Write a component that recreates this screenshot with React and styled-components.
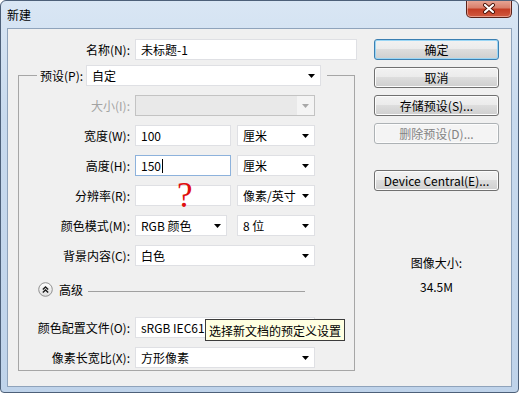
import React from 'react';
import styled, { createGlobalStyle, css } from 'styled-components';

const GlobalStyle = createGlobalStyle`
  html, body { margin: 0; padding: 0; background: #fff; }
  body {
    font-family: "Noto Sans CJK SC", "Noto Sans", sans-serif;
    font-size: 12px;
    color: #000;
  }
`;

const Window = styled.div`
  width: 519px;
  height: 393px;
  box-sizing: border-box;
  border: 1px solid #4d6079;
  border-radius: 6px 6px 4px 4px;
  background: linear-gradient(180deg, #d9e6f4 0%, #c8daee 30%, #bfd3ea 100%);
  display: flex;
  flex-direction: column;
  overflow: hidden;
`;

const TitleBar = styled.div`
  height: 27px;
  flex: none;
  display: flex;
  align-items: flex-start;
  padding-left: 6px;
`;

const Title = styled.span`
  line-height: 27px;
  font-size: 12px;
`;

const CloseButton = styled.div`
  margin-left: auto;
  margin-right: 6px;
  margin-top: -1px;
  width: 46px;
  height: 18px;
  box-sizing: border-box;
  border: 1px solid #5a2219;
  border-top: none;
  border-radius: 0 0 5px 5px;
  background: linear-gradient(180deg, #e8a898 0%, #d9806c 45%, #c43d24 55%, #d15a40 100%);
  box-shadow: inset 0 0 0 1px rgba(255, 220, 210, 0.5);
  display: flex;
  align-items: center;
  justify-content: center;
`;

const Client = styled.div`
  flex: 1;
  margin: 0 6px 5px 6px;
  border: 1px solid #8fa3bb;
  background: #f0f0f0;
  display: flex;
`;

const LeftPanel = styled.div`
  width: 350px;
  flex: none;
  padding-top: 10px;
`;

const NameRow = styled.div`
  display: grid;
  grid-template-columns: 122px 222px;
  column-gap: 5px;
  height: 21px;
`;

const Label = styled.span`
  display: flex;
  align-items: center;
  justify-content: flex-end;
  white-space: nowrap;
  color: ${(p) => (p.$disabled ? '#a3a3a3' : '#000')};
`;

const boxBase = css`
  box-sizing: border-box;
  height: 21px;
  display: flex;
  align-items: center;
  background: #fff;
  border: 1px solid ${(p) => (p.$focused ? '#8db2dc' : '#dfe0e4')};
  padding-left: 5px;
  white-space: nowrap;
  width: ${(p) => (p.$w ? `${p.$w}px` : '100%')};
`;

const TextBox = styled.div`
  ${boxBase};
  position: relative;
`;

const SelectBox = styled.div`
  ${boxBase};
  padding-right: 5px;
  justify-content: space-between;
  position: relative;
  ${(p) =>
    p.$disabled &&
    css`
      background: linear-gradient(90deg, #e9e9e9 0, #e9e9e9 calc(100% - 17px), #f4f4f4 calc(100% - 17px));
      border-color: #c3c3c3;
    `}
`;

const SelectText = styled.span`
  overflow: hidden;
  flex: 1;
`;

const Caret = styled.span`
  display: inline-block;
  width: 1px;
  height: 14px;
  background: #000;
  margin-left: 1px;
`;

const Mark = styled.span`
  position: absolute;
  left: 41px;
  top: -6px;
  font-family: "Liberation Serif", serif;
  font-size: 35px;
  line-height: 32px;
  color: #e01010;
`;

const GroupBox = styled.fieldset`
  margin: 5px 0 0 10px;
  padding: 0 0 2px 0;
  width: 337px;
  box-sizing: border-box;
  border: 1px solid #a6a6a6;
  min-width: 0;
`;

const Legend = styled.legend`
  margin-left: 18px;
  padding: 0 6px 0 3px;
  display: flex;
  align-items: center;
  gap: 3px;
  height: 21px;
`;

const FieldGrid = styled.div`
  display: grid;
  grid-template-columns: 111px 180px;
  column-gap: 5px;
  row-gap: 9px;
  grid-auto-rows: 21px;
  margin-top: ${(p) => p.$top}px;
`;

const Pair = styled.div`
  display: flex;
  justify-content: space-between;
`;

const AdvancedRow = styled.div`
  display: flex;
  align-items: center;
  height: 16px;
  margin-top: 15px;
  padding-left: 19px;
`;

const AdvancedText = styled.span`
  margin-left: 6px;
`;

const Rule = styled.div`
  flex: none;
  width: 217px;
  height: 1px;
  margin: 4px 0 0 5px;
  background: #a0a0a0;
`;

const Tooltip = styled.div`
  position: absolute;
  left: 69px;
  top: 1px;
  z-index: 2;
  height: 22px;
  box-sizing: border-box;
  padding: 0 3px 0 3px;
  display: flex;
  align-items: center;
  background: #ffffe1;
  border: 1px solid #3c3c3c;
  white-space: nowrap;
`;

const RightColumn = styled.div`
  width: 125px;
  padding: 10px 0 0 16px;
  display: flex;
  flex-direction: column;
  gap: 7px;
`;

const Button = styled.div`
  height: 21px;
  box-sizing: border-box;
  display: flex;
  align-items: center;
  justify-content: center;
  border-radius: 3px;
  border: 1px solid ${(p) => (p.$default ? '#3c7fb1' : p.$disabled ? '#adb2b5' : '#707070')};
  color: ${(p) => (p.$disabled ? '#838383' : '#000')};
  background: ${(p) =>
    p.$disabled
      ? '#f4f4f4'
      : 'linear-gradient(180deg, #f2f2f2 0%, #ebebeb 49%, #dddddd 50%, #cfcfcf 100%)'};
  box-shadow: ${(p) => (p.$default ? 'inset 0 0 0 1px #9ad6f5' : 'inset 0 0 0 1px #fcfcfc')};
  margin-top: ${(p) => p.$gapTop || 0}px;
  white-space: nowrap;
`;

const SizeInfo = styled.div`
  margin-top: 57px;
  display: flex;
  flex-direction: column;
  align-items: center;
  gap: 8px;
  line-height: 16px;
`;

const Arrow = ({ disabled }) => (
  <svg width="7" height="4" viewBox="0 0 7 4">
    <polygon points="0,0 7,0 3.5,4" fill={disabled ? '#a8a8a8' : '#000'} />
  </svg>
);

const Select = ({ children, w, disabled }) => (
  <SelectBox $w={w} $disabled={disabled}>
    <SelectText>{children}</SelectText>
    <Arrow disabled={disabled} />
  </SelectBox>
);

const CollapseIcon = () => (
  <svg width="15" height="15" viewBox="0 0 15 15">
    <defs>
      <linearGradient id="cg" x1="0" y1="0" x2="0" y2="1">
        <stop offset="0" stopColor="#ffffff" />
        <stop offset="1" stopColor="#dedede" />
      </linearGradient>
    </defs>
    <circle cx="7.5" cy="7.5" r="6.8" fill="url(#cg)" stroke="#8f8f8f" strokeWidth="1" />
    <path d="M4.8 7.4 L7.5 4.9 L10.2 7.4 M4.8 10.4 L7.5 7.9 L10.2 10.4" fill="none" stroke="#1a1a1a" strokeWidth="1.4" />
  </svg>
);

const CloseIcon = () => (
  <svg width="14" height="11" viewBox="0 0 14 11">
    <path d="M3 2 L11 9 M11 2 L3 9" stroke="#4a1208" strokeWidth="4" strokeLinecap="round" />
    <path d="M3 2 L11 9 M11 2 L3 9" stroke="#ffffff" strokeWidth="2.2" strokeLinecap="round" />
  </svg>
);

export default function App() {
  return (
    <Window>
      <GlobalStyle />
      <TitleBar>
        <Title>新建</Title>
        <CloseButton>
          <CloseIcon />
        </CloseButton>
      </TitleBar>
      <Client>
        <LeftPanel>
          <NameRow>
            <Label>名称(N):</Label>
            <TextBox>未标题-1</TextBox>
          </NameRow>

          <GroupBox>
            <Legend>
              <Label>预设(P):</Label>
              <Select w={235}>自定</Select>
            </Legend>

            <FieldGrid $top={9}>
              <Label $disabled>大小(I):</Label>
              <Select disabled />

              <Label>宽度(W):</Label>
              <Pair>
                <TextBox $w={96}>100</TextBox>
                <Select w={78}>厘米</Select>
              </Pair>

              <Label>高度(H):</Label>
              <Pair>
                <TextBox $w={96} $focused>
                  150<Caret />
                </TextBox>
                <Select w={78}>厘米</Select>
              </Pair>

              <Label>分辨率(R):</Label>
              <Pair>
                <TextBox $w={96}>
                  <Mark>?</Mark>
                </TextBox>
                <Select w={78}>像素/英寸</Select>
              </Pair>

              <Label>颜色模式(M):</Label>
              <Pair>
                <Select w={92}>RGB 颜色</Select>
                <Select w={78}>8 位</Select>
              </Pair>

              <Label>背景内容(C):</Label>
              <Select>白色</Select>
            </FieldGrid>

            <AdvancedRow>
              <CollapseIcon />
              <AdvancedText>高级</AdvancedText>
              <Rule />
            </AdvancedRow>

            <FieldGrid $top={20}>
              <Label>颜色配置文件(O):</Label>
              <SelectBox>
                <SelectText>sRGB IEC61</SelectText>
                <Arrow />
                <Tooltip>选择新文档的预定义设置</Tooltip>
              </SelectBox>

              <Label>像素长宽比(X):</Label>
              <Select>方形像素</Select>
            </FieldGrid>
          </GroupBox>
        </LeftPanel>

        <RightColumn>
          <Button $default>确定</Button>
          <Button>取消</Button>
          <Button>存储预设(S)...</Button>
          <Button $disabled>删除预设(D)...</Button>
          <Button $gapTop={19}>Device Central(E)...</Button>
          <SizeInfo>
            <span>图像大小:</span>
            <span>34.5M</span>
          </SizeInfo>
        </RightColumn>
      </Client>
    </Window>
  );
}
